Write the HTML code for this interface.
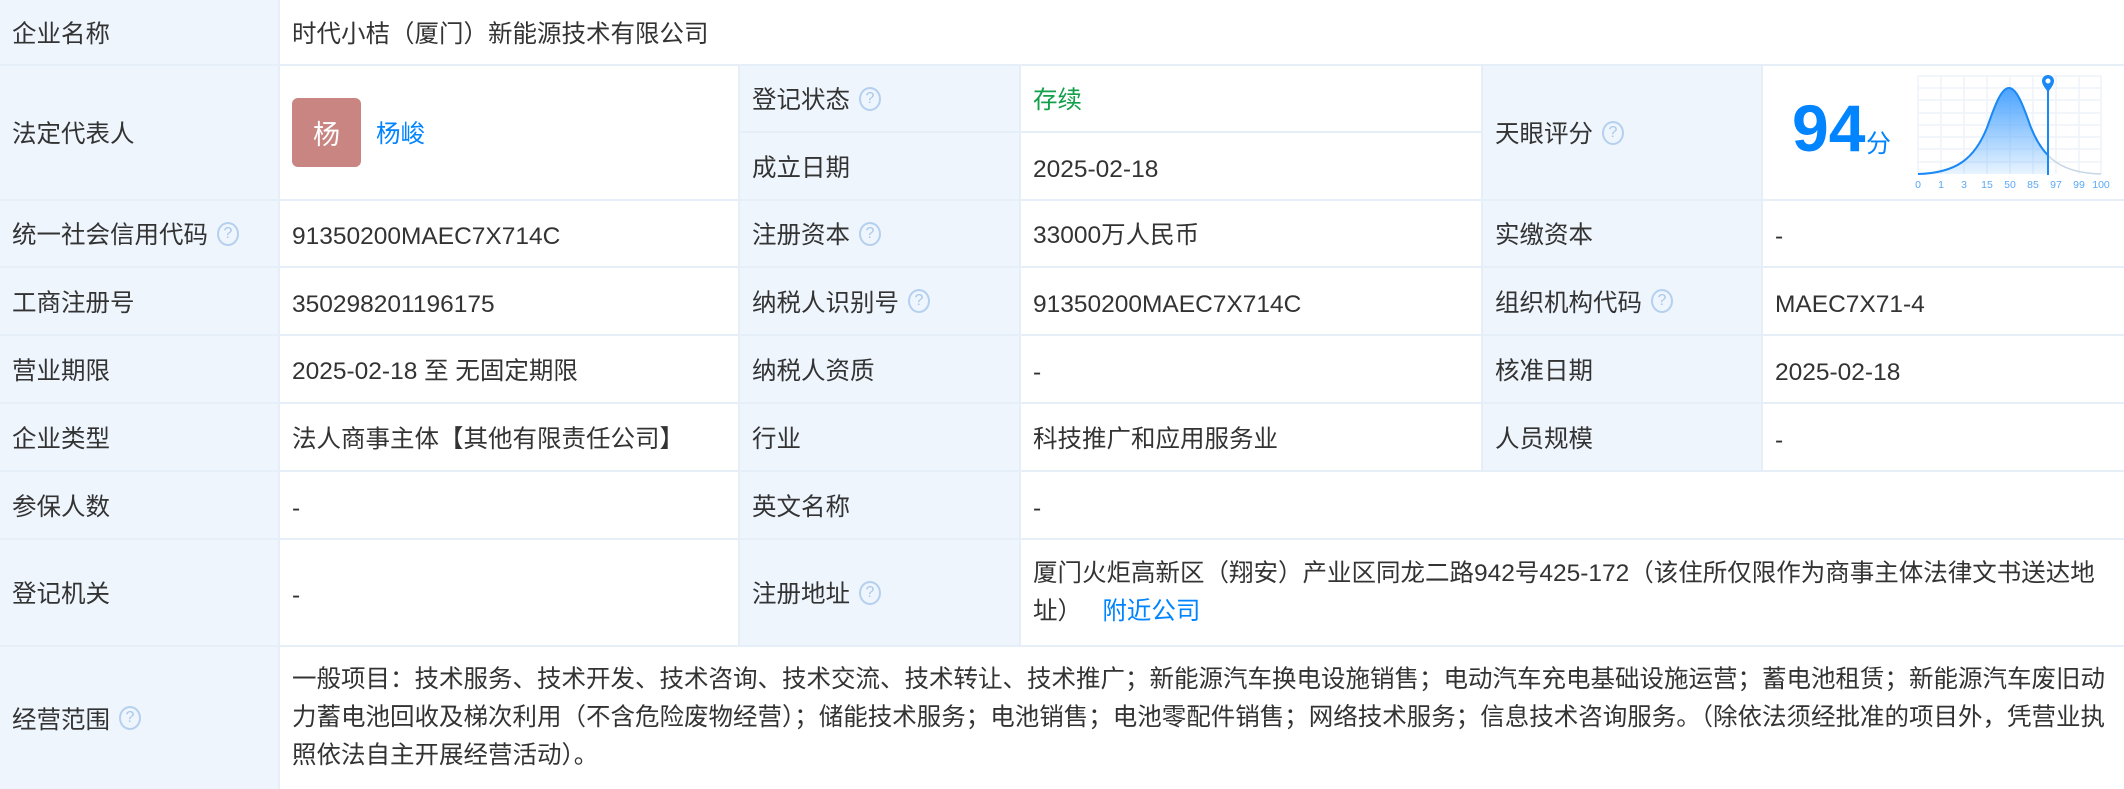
<!DOCTYPE html>
<html><head><meta charset="utf-8"><style>
*{margin:0;padding:0;box-sizing:border-box}
body{width:2124px;height:787px;background:#fff;position:relative;overflow:hidden;font-family:"Liberation Sans","Noto Sans CJK SC",sans-serif;font-size:24.5px;color:#333}
.c{position:absolute;display:flex;align-items:center;padding-left:12px;border-top:2px solid #e6eef7;border-left:2px solid #e6eef7;background:#fff}
.l{background:#eef5fd}
.n{padding-top:7px}
.q{display:inline-block;width:22px;height:24px;border:2px solid #b5d0ee;border-radius:50%;color:#a9c8e8;font-size:16px;line-height:20px;text-align:center;margin-left:9px;font-weight:normal}
a{color:#0084ff;text-decoration:none}
</style></head><body>
<div class="c l" style="left:-2px;top:-2px;width:280px;height:66px">企业名称</div>
<div class="c" style="left:278px;top:-2px;width:1848px;height:66px">时代小桔（厦门）新能源技术有限公司</div>
<div class="c l" style="left:-2px;top:64px;width:280px;height:135px">法定代表人</div>
<div class="c" style="left:278px;top:64px;width:460px;height:135px"><div style="width:69px;height:69px;background:#c98581;border-radius:6px;color:#fff;font-size:27px;display:flex;align-items:center;justify-content:center">杨</div><a style="margin-left:15px">杨峻</a></div>
<div class="c l" style="left:738px;top:64px;width:281px;height:67px">登记状态<span class="q">?</span></div>
<div class="c" style="left:1019px;top:64px;width:462px;height:67px;color:#13a04b">存续</div>
<div class="c l" style="left:738px;top:131px;width:281px;height:68px">成立日期</div>
<div class="c n" style="left:1019px;top:131px;width:462px;height:68px">2025-02-18</div>
<div class="c l" style="left:1481px;top:64px;width:280px;height:135px">天眼评分<span class="q">?</span></div>
<div class="c" style="left:1761px;top:64px;width:365px;height:135px"></div>
<div style="position:absolute;left:1792px;top:88px;font-size:66px;font-weight:bold;color:#0084ff;line-height:80px">94</div>
<div style="position:absolute;left:1866px;top:124px;font-size:25px;color:#0084ff">分</div>
<svg style="position:absolute;left:1910px;top:70px" width="205" height="125" viewBox="0 0 205 125">
<defs><linearGradient id="g" x1="0" y1="0" x2="0" y2="1"><stop offset="0" stop-color="#4aa3ff"/><stop offset="1" stop-color="#4aa3ff" stop-opacity="0.12"/></linearGradient>
<clipPath id="cl"><rect x="0" y="0" width="138" height="125"/></clipPath><clipPath id="cr"><rect x="138" y="0" width="70" height="125"/></clipPath></defs>
<g stroke="#edf3fa" stroke-width="1.5" fill="none">
<path d="M8,6V104M31,6V104M54,6V104M77,6V104M100,6V104M123,6V104M146,6V104M169,6V104M191,6V104"/>
<path d="M8,6H191M8,18H191M8,30H191M8,43H191M8,55H191M8,67H191M8,79H191M8,92H191"/>
</g>
<path clip-path="url(#cl)" d="M8,104 C45,103 65,90 78,55 C86,32 92,18 99,18 C106,18 112,32 120,55 C133,90 153,103 191,104Z" fill="url(#g)"/>
<path clip-path="url(#cl)" d="M8,104 C45,103 65,90 78,55 C86,32 92,18 99,18 C106,18 112,32 120,55 C133,90 153,103 191,104" fill="none" stroke="#1a88f5" stroke-width="2"/>
<path clip-path="url(#cr)" d="M8,104 C45,103 65,90 78,55 C86,32 92,18 99,18 C106,18 112,32 120,55 C133,90 153,103 191,104" fill="none" stroke="#c8d6e6" stroke-width="1.5"/>
<line x1="138" y1="14" x2="138" y2="105" stroke="#1a88f5" stroke-width="2"/>
<path d="M138,22 C133,16 132,13 132,11 A6,6 0 1 1 144,11 C144,13 143,16 138,22Z" fill="#1a88f5"/>
<circle cx="138" cy="11" r="2.5" fill="#fff"/>
<g fill="#5aa8f5" font-size="10.5" text-anchor="middle" font-family="Liberation Sans,sans-serif">
<text x="8" y="118">0</text><text x="31" y="118">1</text><text x="54" y="118">3</text><text x="77" y="118">15</text><text x="100" y="118">50</text><text x="123" y="118">85</text><text x="146" y="118">97</text><text x="169" y="118">99</text><text x="191" y="118">100</text>
</g></svg>
<div class="c l" style="left:-2px;top:199px;width:280px;height:67px">统一社会信用代码<span class="q">?</span></div>
<div class="c n" style="left:278px;top:199px;width:460px;height:67px">91350200MAEC7X714C</div>
<div class="c l" style="left:738px;top:199px;width:281px;height:67px">注册资本<span class="q">?</span></div>
<div class="c" style="left:1019px;top:199px;width:462px;height:67px">33000万人民币</div>
<div class="c l" style="left:1481px;top:199px;width:280px;height:67px">实缴资本</div>
<div class="c n" style="left:1761px;top:199px;width:365px;height:67px">-</div>

<div class="c l" style="left:-2px;top:266px;width:280px;height:68px">工商注册号</div>
<div class="c n" style="left:278px;top:266px;width:460px;height:68px">350298201196175</div>
<div class="c l" style="left:738px;top:266px;width:281px;height:68px">纳税人识别号<span class="q">?</span></div>
<div class="c n" style="left:1019px;top:266px;width:462px;height:68px">91350200MAEC7X714C</div>
<div class="c l" style="left:1481px;top:266px;width:280px;height:68px">组织机构代码<span class="q">?</span></div>
<div class="c n" style="left:1761px;top:266px;width:365px;height:68px">MAEC7X71-4</div>

<div class="c l" style="left:-2px;top:334px;width:280px;height:68px">营业期限</div>
<div class="c" style="left:278px;top:334px;width:460px;height:68px">2025-02-18 至 无固定期限</div>
<div class="c l" style="left:738px;top:334px;width:281px;height:68px">纳税人资质</div>
<div class="c n" style="left:1019px;top:334px;width:462px;height:68px">-</div>
<div class="c l" style="left:1481px;top:334px;width:280px;height:68px">核准日期</div>
<div class="c n" style="left:1761px;top:334px;width:365px;height:68px">2025-02-18</div>

<div class="c l" style="left:-2px;top:402px;width:280px;height:68px">企业类型</div>
<div class="c" style="left:278px;top:402px;width:460px;height:68px">法人商事主体【其他有限责任公司】</div>
<div class="c l" style="left:738px;top:402px;width:281px;height:68px">行业</div>
<div class="c" style="left:1019px;top:402px;width:462px;height:68px">科技推广和应用服务业</div>
<div class="c l" style="left:1481px;top:402px;width:280px;height:68px">人员规模</div>
<div class="c n" style="left:1761px;top:402px;width:365px;height:68px">-</div>
<div class="c l" style="left:-2px;top:470px;width:280px;height:68px">参保人数</div>
<div class="c n" style="left:278px;top:470px;width:460px;height:68px">-</div>
<div class="c l" style="left:738px;top:470px;width:281px;height:68px">英文名称</div>
<div class="c n" style="left:1019px;top:470px;width:1107px;height:68px">-</div>
<div class="c l" style="left:-2px;top:538px;width:280px;height:107px">登记机关</div>
<div class="c n" style="left:278px;top:538px;width:460px;height:107px">-</div>
<div class="c l" style="left:738px;top:538px;width:281px;height:107px">注册地址<span class="q">?</span></div>
<div class="c" style="left:1019px;top:538px;width:1107px;height:107px;line-height:38px;padding-right:14px"><div>厦门火炬高新区（翔安）产业区同龙二路942号425-172（该住所仅限作为商事主体法律文书送达地址）&nbsp;&nbsp; <a>附近公司</a></div></div>
<div class="c l" style="left:-2px;top:645px;width:280px;height:144px">经营范围<span class="q">?</span></div>
<div class="c" style="left:278px;top:645px;width:1848px;height:144px;line-height:38px;padding-right:14px"><div>一般项目：技术服务、技术开发、技术咨询、技术交流、技术转让、技术推广；新能源汽车换电设施销售；电动汽车充电基础设施运营；蓄电池租赁；新能源汽车废旧动力蓄电池回收及梯次利用（不含危险废物经营）；储能技术服务；电池销售；电池零配件销售；网络技术服务；信息技术咨询服务。（除依法须经批准的项目外，凭营业执照依法自主开展经营活动）。</div></div>
</body></html>
